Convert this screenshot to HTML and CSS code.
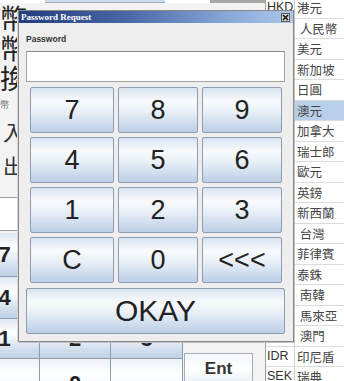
FILE: index.html
```html
<!DOCTYPE html>
<html lang="zh-Hant">
  <head>
    <meta charset="UTF-8" />
    <meta name="viewport" content="width=device-width, initial-scale=1.0" />
    <title>Password Request</title>
    <link rel="stylesheet" href="styles.css">
  </head>
  <body>
    <div class="screen">
      <!-- exchange panel behind the dialog -->
      <div class="main">
        <div class="tabs">
          <span class="tab tab-plain"></span>
          <span class="tab tab-blue"></span>
          <span class="tab tab-plain"></span>
          <span class="tab tab-gray"></span>
        </div>
        <div class="big-labels">
          <div>幣</div>
          <div>幣</div>
          <div>換</div>
        </div>
        <div class="small-note">幣</div>
        <div class="io-labels">
          <div>入</div>
          <div>出</div>
        </div>
        <div class="amount-box"></div>
        <div class="bg-keypad">
          <div class="bg-grid">
            <div class="bg-key">7</div>
            <div class="bg-key">8</div>
            <div class="bg-key">9</div>
            <div class="bg-key">4</div>
            <div class="bg-key">5</div>
            <div class="bg-key">6</div>
            <div class="bg-key">1</div>
            <div class="bg-key">2</div>
            <div class="bg-key">3</div>
            <div class="bg-key bg-key-light"></div>
            <div class="bg-key bg-key-light">0</div>
            <div class="bg-key bg-key-light"></div>
          </div>
          <div class="bg-side">
            <div class="ent-key">Ent</div>
          </div>
        </div>
      </div>

      <!-- currency list -->
      <div class="currency-list">
        <div class="row"><span class="code">HKD</span><span class="name">港元</span></div>
        <div class="row"><span class="code">CNY</span><span class="name">&nbsp;人民幣</span></div>
        <div class="row"><span class="code">USD</span><span class="name">美元</span></div>
        <div class="row"><span class="code">SGD</span><span class="name">新加坡</span></div>
        <div class="row"><span class="code">JPY</span><span class="name">日圓</span></div>
        <div class="row selected"><span class="code">AUD</span><span class="name">澳元</span></div>
        <div class="row"><span class="code">CAD</span><span class="name">加拿大</span></div>
        <div class="row"><span class="code">CHF</span><span class="name">瑞士郎</span></div>
        <div class="row"><span class="code">EUR</span><span class="name">歐元</span></div>
        <div class="row"><span class="code">GBP</span><span class="name">英鎊</span></div>
        <div class="row"><span class="code">NZD</span><span class="name">新西蘭</span></div>
        <div class="row"><span class="code">TWD</span><span class="name">&nbsp;台灣</span></div>
        <div class="row"><span class="code">PHP</span><span class="name">菲律賓</span></div>
        <div class="row"><span class="code">THB</span><span class="name">泰銖</span></div>
        <div class="row"><span class="code">KRW</span><span class="name">&nbsp;南韓</span></div>
        <div class="row"><span class="code">MYR</span><span class="name">&nbsp;馬來亞</span></div>
        <div class="row"><span class="code">MOP</span><span class="name">&nbsp;澳門</span></div>
        <div class="row"><span class="code">IDR</span><span class="name">印尼盾</span></div>
        <div class="row"><span class="code">SEK</span><span class="name">瑞典</span></div>
      </div>

      <!-- Password dialog -->
      <div class="dialog">
        <div class="titlebar">
          <span class="title">Password Request</span>
          <span class="close-btn">
            <svg width="7" height="7" viewBox="0 0 7 7">
              <path d="M1 1 L6 6 M6 1 L1 6" stroke="#111" stroke-width="1.6" />
            </svg>
          </span>
        </div>
        <div class="dialog-body">
          <div class="field-label">Password</div>
          <div class="password-field"></div>
          <div class="keypad">
            <button class="key">7</button>
            <button class="key">8</button>
            <button class="key">9</button>
            <button class="key">4</button>
            <button class="key">5</button>
            <button class="key">6</button>
            <button class="key">1</button>
            <button class="key">2</button>
            <button class="key">3</button>
            <button class="key">C</button>
            <button class="key">0</button>
            <button class="key">&lt;&lt;&lt;</button>
          </div>
          <button class="key okay">OKAY</button>
        </div>
      </div>
    </div>
  </body>
</html>
```

FILE: styles.css
```css
body {
  margin: 0;
  font-family: "Liberation Sans", Arial, sans-serif;
  background-color: #eeeeee;
}
.screen {
  position: relative;
  width: 344px;
  height: 381px;
  overflow: hidden;
  display: flex;
}

/* background panel */
.main {
  width: 265px;
  flex: none;
  display: flex;
  flex-direction: column;
  background: #f3f3f3;
  overflow: hidden;
}
.main > * {
  flex: none;
}
.tabs {
  display: flex;
  height: 3px;
}
.tab {
  height: 3px;
}
.tab-plain {
  width: 45px;
  background: #ffffff;
}
.tab-blue {
  width: 120px;
  background: #cddcee;
  border-bottom: 1px solid #9aa9bc;
  box-sizing: border-box;
}
.tab-gray {
  flex: 1;
  background: #a9a9a9;
}
.big-labels {
  font-family: "Noto Sans CJK TC", sans-serif;
  font-size: 27px;
  line-height: 30px;
  color: #222;
  white-space: nowrap;
}
.small-note {
  margin-top: 6px;
  font-family: "Noto Sans CJK TC", sans-serif;
  font-size: 9px;
  line-height: 12px;
  color: #777;
}
.io-labels {
  margin-top: 3px;
  padding-left: 3px;
  font-family: "Noto Sans CJK TC", sans-serif;
  font-size: 21px;
  line-height: 34px;
  color: #333;
}
.amount-box {
  margin-top: 15px;
  height: 34px;
  box-sizing: border-box;
  background: #ffffff;
  border-top: 1px solid #9a9a9a;
  border-bottom: 1px solid #9a9a9a;
}
.bg-keypad {
  margin-top: 2px;
  display: flex;
  align-items: flex-start;
}
.bg-grid {
  margin-left: -30px;
  display: grid;
  grid-template-columns: 69px 70px 71px;
  grid-template-rows: 43px 41px 39px 40px;
  gap: 1px;
  background: #8d9bae;
  border-right: 1px solid #8d9bae;
}
.bg-key {
  display: flex;
  align-items: center;
  justify-content: center;
  font-size: 22px;
  font-weight: bold;
  color: #222;
  background: linear-gradient(to bottom, #dfe8f2 0%, #ffffff 35%, #d3e0ef 75%, #bfd1e6 100%);
}
.bg-key-light {
  align-items: flex-start;
  padding-top: 12px;
  background: linear-gradient(to bottom, #eef3f8 0%, #ffffff 40%, #e4ecf5 100%);
}
.bg-side {
  width: 69px;
  padding-top: 120px;
  margin-left: 1px;
}
.ent-key {
  height: 40px;
  box-sizing: border-box;
  padding-top: 5px;
  text-align: center;
  font-size: 17px;
  font-weight: bold;
  color: #333;
  border: 1px solid #a4aebb;
  background: linear-gradient(to bottom, #f3f6fa 0%, #ffffff 40%, #dde7f2 100%);
}

/* currency list */
.currency-list {
  flex: 1;
  margin-top: -2px;
  background: #ffffff;
  border-left: 1px solid #a0a0a0;
}
.row {
  display: flex;
  height: 20.5px;
  box-sizing: border-box;
  border-bottom: 1px solid #dcdcdc;
  font-size: 12.5px;
  line-height: 19px;
  color: #333;
  white-space: nowrap;
}
.code {
  width: 28px;
  flex: none;
  overflow: hidden;
  padding-left: 1px;
  box-sizing: border-box;
}
.name {
  flex: 1;
  padding-left: 2px;
  border-left: 1px solid #d0d0d0;
  font-family: "Noto Sans CJK TC", sans-serif;
  color: #444;
}
.row.selected .name {
  background: #b9cfe8;
}

/* dialog */
.dialog {
  position: absolute;
  left: 18px;
  top: 10px;
  width: 276px;
  height: 332px;
  box-sizing: border-box;
  border: 1px solid #868686;
  box-shadow: -1px 0 0 #d8d8d8, 1px 1px 0 #c4c4c4;
  background: #eeeeee;
  display: flex;
  flex-direction: column;
}
.titlebar {
  height: 12px;
  display: flex;
  align-items: center;
  justify-content: space-between;
  padding: 0 3px 0 2px;
  background: linear-gradient(to right, #213c7c 0%, #4a68a6 40%, #86a6d6 75%, #abc8ec 100%);
}
.title {
  font-family: "Liberation Serif", "Times New Roman", serif;
  font-weight: bold;
  font-size: 9px;
  line-height: 11px;
  color: #ffffff;
}
.close-btn {
  width: 9px;
  height: 9px;
  box-sizing: border-box;
  border: 1px solid #5a5a5a;
  background: #d8d6d2;
  display: flex;
  align-items: center;
  justify-content: center;
}
.dialog-body {
  flex: 1;
  padding: 0 8px 0 7px;
  display: flex;
  flex-direction: column;
}
.field-label {
  margin-top: 10px;
  font-size: 8.5px;
  font-weight: bold;
  line-height: 12px;
  color: #333;
}
.password-field {
  margin-top: 6px;
  height: 31px;
  box-sizing: border-box;
  background: #ffffff;
  border: 1px solid #a3a3a3;
  border-top-color: #8a8a8a;
}
.keypad {
  margin-top: 5px;
  padding: 0 3px 0 4px;
  display: grid;
  grid-template-columns: 84px 80px 80px;
  grid-template-rows: repeat(4, 46px);
  gap: 4px;
}
.key {
  margin: 0;
  padding: 0;
  font-family: "Liberation Sans", Arial, sans-serif;
  font-size: 27px;
  color: #222;
  border: 1px solid #8e9db2;
  border-radius: 2px;
  background: linear-gradient(to bottom, #d9e4f0 0%, #f9fbfd 30%, #e8eff7 55%, #cfddee 80%, #bccfe5 100%);
  cursor: pointer;
}
.okay {
  margin-top: 5px;
  height: 46px;
  font-size: 30px;
}
```
